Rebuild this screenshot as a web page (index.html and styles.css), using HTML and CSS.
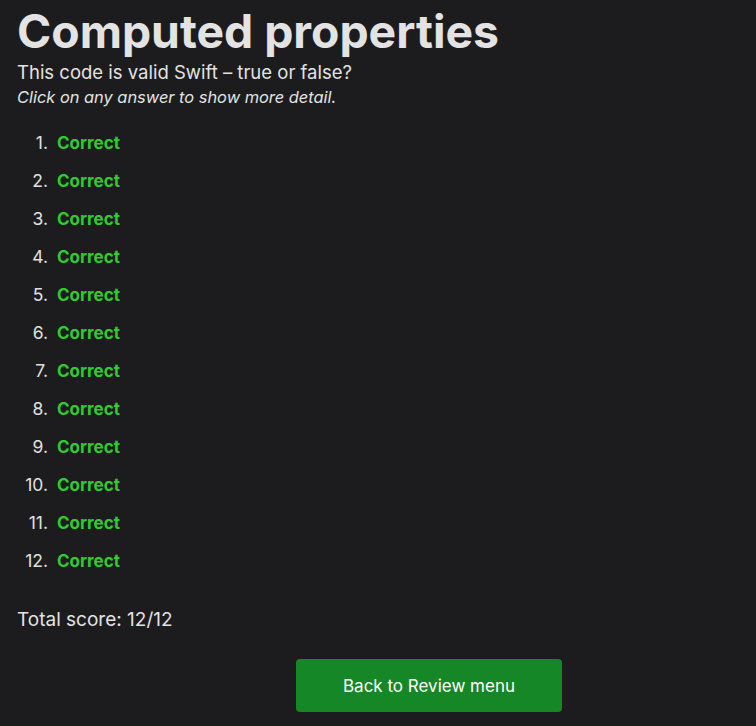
FILE: index.html
```html
<!DOCTYPE html>
<html>
<head>
<meta charset="utf-8">
<link rel="stylesheet" href="styles.css">
</head>
<body>
<main class="page">
  <h1 class="title">Computed properties</h1>
  <p class="subtitle">This code is valid Swift – true or false?</p>
  <p class="hint">Click on any answer to show more detail.</p>
  <ol class="answers">
    <li><span class="correct">Correct</span></li>
    <li><span class="correct">Correct</span></li>
    <li><span class="correct">Correct</span></li>
    <li><span class="correct">Correct</span></li>
    <li><span class="correct">Correct</span></li>
    <li><span class="correct">Correct</span></li>
    <li><span class="correct">Correct</span></li>
    <li><span class="correct">Correct</span></li>
    <li><span class="correct">Correct</span></li>
    <li><span class="correct">Correct</span></li>
    <li><span class="correct">Correct</span></li>
    <li><span class="correct">Correct</span></li>
  </ol>
  <p class="score">Total score: 12/12</p>
  <div class="actions">
    <a class="button" href="#">Back to Review menu</a>
  </div>
</main>
</body>
</html>
```
FILE: styles.css
```css
html, body {
  margin: 0;
  padding: 0;
  background: #1c1c1e;
}
body {
  font-family: Inter, "Noto Sans", sans-serif;
  color: #e3e3e3;
}
.page {
  padding: 5px 17px 0 17px;
}
.title {
  margin: 0;
  font-size: 46.3px;
  font-weight: 700;
  line-height: 52px;
}
.subtitle {
  margin: 3px 0 0 0;
  font-size: 18.5px;
  line-height: 24px;
}
.hint {
  margin: 2px 0 0 0;
  font-size: 16.4px;
  font-style: italic;
  line-height: 22px;
}
.answers {
  list-style: none;
  counter-reset: item;
  margin: 24px 0 0 0;
  padding: 0;
  font-size: 17px;
  line-height: 22px;
}
.answers li {
  counter-increment: item;
  display: flex;
  gap: 9px;
  margin-bottom: 16px;
}
.answers li::before {
  content: counter(item) ".";
  width: 31px;
  text-align: right;
  color: #e0e0e0;
  font-size: 17.5px;
}
.correct {
  color: #2ecc2e;
  font-weight: 700;
}
.score {
  margin: 36px 0 0 0;
  font-size: 19px;
  line-height: 24px;
}
.actions {
  margin-top: 27px;
  padding-left: 279px;
}
.button {
  display: inline-flex;
  align-items: center;
  justify-content: center;
  width: 266px;
  height: 53px;
  background: #158726;
  color: #ffffff;
  border-radius: 4px;
  text-decoration: none;
  font-size: 17px;
}
```
